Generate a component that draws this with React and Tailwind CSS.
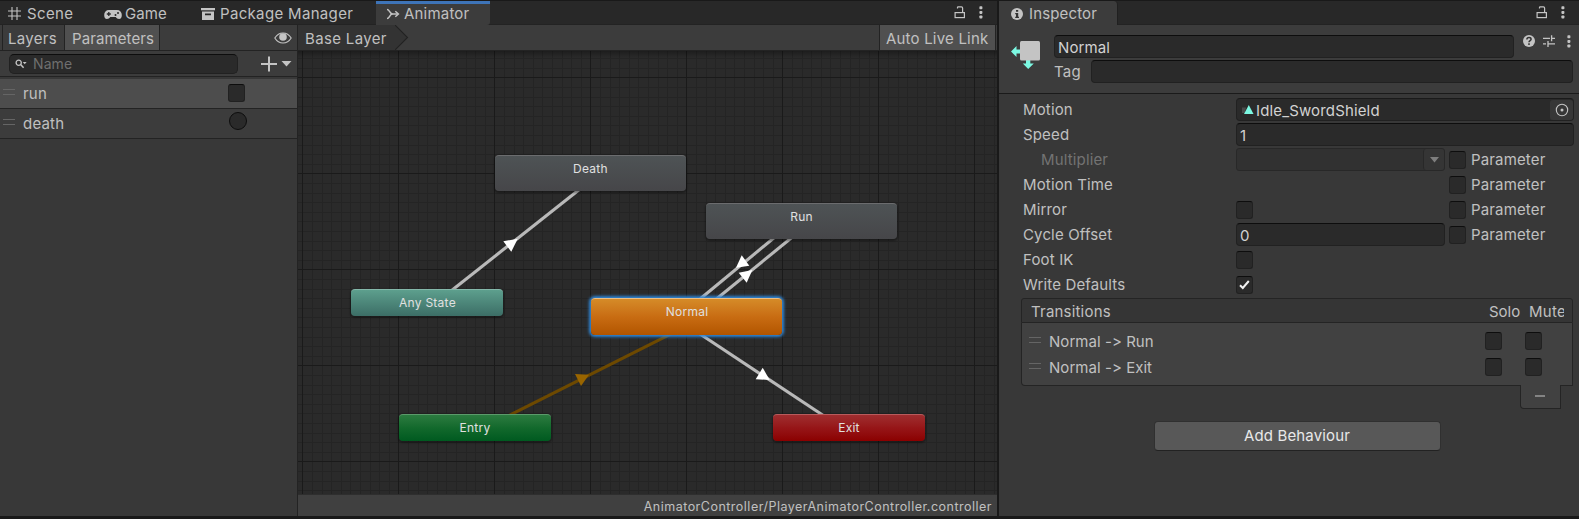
import React from "react";

const base = "whitespace-nowrap leading-none";

function Box({ className = "", checked = false }) {
  return (
    <span
      className={`flex h-[18px] w-[17px] shrink-0 items-center justify-center rounded-[3px] border border-[#212121] border-t-[#0d0d0d] bg-[#2a2a2a] ${className}`}
    >
      {checked && (
        <svg width="13" height="12" viewBox="0 0 13 12" fill="none">
          <path d="M2 6.2 4.8 9 10.8 2" stroke="#f0f0f0" strokeWidth="2" />
        </svg>
      )}
    </span>
  );
}

function Lock() {
  return (
    <svg width="12" height="13" viewBox="0 0 12 13" fill="none" stroke="#c4c4c4" strokeWidth="1.2">
      <rect x="1.1" y="6.6" width="9.3" height="5" />
      <path d="M3.500 2.600V1.500Q3.500.8 4.200.8H7.400Q8.600.8 8.600 2V6.400" />
    </svg>
  );
}

function Kebab() {
  return (
    <svg width="4" height="13" viewBox="0 0 4 13" fill="#c4c4c4">
      <rect x=".4" y=".3" width="3" height="3" rx=".8" />
      <rect x=".4" y="4.9" width="3" height="3" rx=".8" />
      <rect x=".4" y="9.5" width="3" height="3" rx=".8" />
    </svg>
  );
}

function Handle({ className = "" }) {
  return (
    <span className={`h-[6px] w-[12px] shrink-0 border-y border-[#656565] ${className}`} />
  );
}

function TabBar() {
  return (
    <div className="flex h-[24px] shrink-0 border-b border-[#232323] bg-[#282828] text-[15px] text-[#c0c0c0]">
      <div className="flex w-[95px] items-center pt-[2px] pl-[8px]">
        <svg width="13" height="13" viewBox="0 0 13 13" stroke="#c4c4c4" strokeWidth="1.1">
          <path d="M4 0v13M9 0v13M0 4h13M0 9h13" />
        </svg>
        <span className={`${base} ml-[6px] tracking-[0.35px]`}>Scene</span>
      </div>
      <div className="flex w-[95px] items-center pt-[2px] pl-[9px]">
        <svg className="mt-px" width="18" height="11" viewBox="0 0 18 11">
          <path d="M5 1h8c3 0 4.8 2 4.8 5 0 2.500-1 4-2.700 4-1.600 0-2.500-1-3.400-2H6.300c-.9 1-1.800 2-3.400 2C1.200 10 .2 8.500.2 6 .2 3 2 1 5 1Z" fill="#c4c4c4" />
          <path d="M2.800 5h4M4.800 3v4" stroke="#282828" strokeWidth="1.300" />
          <circle cx="11.500" cy="5.900" r="1" fill="#282828" />
          <circle cx="14" cy="3.900" r="1" fill="#282828" />
        </svg>
        <span className={`${base} ml-[3px] tracking-[0.1px]`}>Game</span>
      </div>
      <div className="flex w-[186px] items-center pt-[2px] pl-[11px]">
        <svg width="14" height="12" viewBox="0 0 14 12" fill="#c4c4c4">
          <path d="M0 0h14v2.300H0z" />
          <path fillRule="evenodd" d="M1 3.500h12V12H1zM4 5.500v1.700h6V5.500z" />
        </svg>
        <span className={`${base} ml-[5px] tracking-[0.33px]`}>Package Manager</span>
      </div>
      <div className="flex h-[24px] w-[114px] items-center rounded-br-[3px] border-t-[3px] border-[#3e74b8] bg-[#3c3c3c] pb-[2px] pl-[10px]">
        <svg width="14" height="12" viewBox="0 0 14 12" fill="none" stroke="#c4c4c4" strokeWidth="1.500">
          <path d="M1 1.500c1.300 0 1.700.7 2.300 1.700C4.200 5 5 6 6.800 6H12M1 10.500c1.300 0 1.700-.7 2.300-1.700C4.200 7 5 6 6.800 6" />
          <path d="M9.300 3.200 12.400 6 9.300 8.800" />
        </svg>
        <span className={`${base} ml-[4px] tracking-[0.2px]`}>Animator</span>
      </div>
      <div className="flex grow items-center justify-end gap-[13px] pr-[14px]">
        <Lock />
        <Kebab />
      </div>
    </div>
  );
}

function ParametersPanel() {
  return (
    <div className="flex w-[298px] shrink-0 flex-col border-r border-[#232323] bg-[#383838] text-[15px] text-[#c0c0c0]">
      <div className="flex h-[26px] shrink-0 border-b border-[#232323] bg-[#3c3c3c] pl-[2px]">
        <div className="flex w-[63px] items-center border-x border-[#232323] pt-[2px] pl-[5px]">
          <span className={`${base} tracking-[0.3px]`}>Layers</span>
        </div>
        <div className="flex w-[95px] items-center border-r border-[#232323] bg-[#505050] pt-[2px] pl-[7px]">
          <span className={`${base} tracking-[0.1px]`}>Parameters</span>
        </div>
        <div className="flex grow items-center justify-end pr-[5px]">
          <svg width="18" height="12" viewBox="0 0 18 12">
            <path d="M.8 6C3 2.500 5.800 1 9 1s6 1.500 8.200 5C15 9.500 12.200 11 9 11S3 9.500.8 6Z" fill="none" stroke="#c4c4c4" strokeWidth="1.100" />
            <circle cx="9" cy="5" r="3.800" fill="#c4c4c4" />
          </svg>
        </div>
      </div>
      <div className="flex h-[26px] shrink-0 items-center border-b border-[#232323] bg-[#3c3c3c] pl-[9px]">
        <div className="flex h-[20px] w-[229px] items-center rounded-[5px] border border-[#212121] border-t-[#0d0d0d] bg-[#2a2a2a] pl-[5px]">
          <svg width="12" height="10" viewBox="0 0 12 10">
            <circle cx="3.700" cy="3.700" r="2.600" fill="none" stroke="#c4c4c4" strokeWidth="1.300" />
            <path d="m5.600 5.600 3 3.200" stroke="#c4c4c4" strokeWidth="1.500" />
            <path d="M7.800 3h3.800L9.700 5.200z" fill="#c4c4c4" />
          </svg>
          <span className={`${base} ml-[6px] text-[14px] tracking-[0.1px] text-[#6f6f6f]`}>Name</span>
        </div>
        <svg className="ml-[23px]" width="31" height="16" viewBox="0 0 31 16">
          <path d="M8 .5v15M0 8h16" stroke="#c4c4c4" strokeWidth="2" />
          <path d="M20.500 5h10L25.500 10.500z" fill="#c4c4c4" />
        </svg>
      </div>
      <div className="mt-[2px] flex h-[30px] shrink-0 items-center border-b border-[#232323] bg-[#4d4d4d] pl-[3px]">
        <Handle className="mb-[4px]" />
        <span className={`${base} mb-px ml-[8px] w-[205px] tracking-[0.2px]`}>run</span>
        <Box className="mb-[2px]" />
      </div>
      <div className="flex h-[30px] shrink-0 items-center border-b border-[#232323] bg-[#3c3c3c] pl-[3px]">
        <Handle className="mb-[4px]" />
        <span className={`${base} mb-px ml-[8px] w-[206px] tracking-[0.2px]`}>death</span>
        <span className="mb-[5px] h-[18px] w-[18px] rounded-full border border-[#0d0d0d] bg-[#2a2a2a]" />
      </div>
    </div>
  );
}

const nodes = [
  { name: "Death", cls: "left-[197px] top-[104px] h-[36px] w-[191px] pt-[7px] from-[#4e5355] to-[#464649] border-t-[#6b6c6e]" },
  { name: "Run", cls: "left-[408px] top-[152px] h-[36px] w-[191px] pt-[7px] from-[#4e5355] to-[#464649] border-t-[#6b6c6e]" },
  { name: "Any State", cls: "left-[53px] top-[238px] h-[27px] w-[152px] pt-[7px] pl-px from-[#5d9f8d] to-[#3c6e66] border-t-[#84b8aa]" },
  { name: "Entry", cls: "left-[101px] top-[363px] h-[27px] w-[152px] pt-[7px] from-[#2b7b40] via-[#12692c] to-[#005a20] border-t-[#5b9a6a]" },
  { name: "Exit", cls: "left-[475px] top-[363px] h-[27px] w-[152px] pt-[7px] from-[#9f2d2f] via-[#961517] to-[#8b0000] border-t-[#b85b5c]" },
  { name: "Normal", cls: "left-[293px] top-[247px] h-[37px] w-[191px] pt-[7px] pl-px from-[#d58b28] via-[#c86c12] to-[#b25500] border-t-[#e9be88] shadow-[0_0_3px_2px_#2f86d6]!" },
];

function Graph() {
  return (
    <div className="relative h-[444px] shrink-0 overflow-hidden border-b border-[#2e2e2e] bg-[#2a2a2a]">
      <svg className="absolute inset-0" width="699" height="443" viewBox="298 51 699 443">
        <defs>
          <pattern id="minor" x="302" y="77" width="96" height="96" patternUnits="userSpaceOnUse">
            <path
              d="M10.500 0v96M20.500 0v96M29.500 0v96M39.500 0v96M48.500 0v96M58.500 0v96M68.500 0v96M77.500 0v96M87.500 0v96M0 10.500h96M0 20.500h96M0 29.500h96M0 39.500h96M0 48.500h96M0 58.500h96M0 68.500h96M0 77.500h96M0 87.500h96"
              stroke="#242424"
              strokeWidth="1"
            />
            <path d="M.5 0v96M0 .5h96" stroke="#1a1a1a" strokeWidth="1" />
          </pattern>
          <linearGradient id="shade" x1="0" y1="0" x2="0" y2="1">
            <stop offset="0" stopColor="#000" stopOpacity=".3" />
            <stop offset="1" stopColor="#000" stopOpacity="0" />
          </linearGradient>
        </defs>
        <rect x="298" y="51" width="699" height="443" fill="url(#minor)" />
        <rect x="298" y="51" width="699" height="7" fill="url(#shade)" />
        <g stroke="#b9b9b9" strokeWidth="3.100">
          <path d="M447.500 293.700 583.500 186.300" />
          <path d="M778 234.500 695.500 302.800" />
          <path d="M711.500 303 795.500 234.500" />
          <path d="M694 330 829 419.300" />
        </g>
        <path d="M504 418 678 330.300" stroke="#6d4900" strokeWidth="3.100" />
        <g fill="#fff">
          <path d="M517.700 238.700 503.300 241.300 511.300 251.700z" />
          <path d="M736 267.700 741.700 255.300 749.300 265.700z" />
          <path d="M752.300 270 738.700 272.700 746.700 282.700z" />
          <path d="M769.700 380 762.700 367.700 755.700 379.300z" />
        </g>
        <path d="M589 374.700 575 374 581 386z" fill="#996500" />
      </svg>
      {nodes.map((n) => (
        <div
          key={n.name}
          className={`absolute flex justify-center rounded-[4px] border-t bg-linear-to-b text-[12px] tracking-[0.25px] text-[#e0e0e0] shadow-[0_1px_2px_1px_rgba(0,0,0,0.35)] ${n.cls}`}
        >
          <span className={base}>{n.name}</span>
        </div>
      ))}
    </div>
  );
}

function GraphPanel() {
  return (
    <div className="flex grow flex-col text-[15px] text-[#c0c0c0]">
      <div className="flex h-[26px] shrink-0 justify-between border-b border-[#232323] bg-[#3c3c3c]">
        <div className="flex">
          <div className="flex w-[97px] items-center bg-[#333] pt-[2px] pl-[7px]">
            <span className={`${base} tracking-[0.35px]`}>Base Layer</span>
          </div>
          <svg width="14" height="25" viewBox="0 0 14 25">
            <path d="M0 0 12.500 12.500 0 25z" fill="#333" />
            <path d="M0 0 12.500 12.500 0 25" fill="none" stroke="#222" strokeWidth="1.100" />
          </svg>
        </div>
        <div className="mr-px flex w-[117px] items-center border-x border-[#232323] bg-[#505050] pt-[2px] pl-[6px]">
          <span className={`${base} tracking-[0.2px]`}>Auto Live Link</span>
        </div>
      </div>
      <Graph />
      <div className="flex grow items-center justify-end bg-[#404040] pt-[3px] pr-[5px] text-[12.500px]">
        <span className={`${base} tracking-[0.49px]`}>AnimatorController/PlayerAnimatorController.controller</span>
      </div>
    </div>
  );
}

const field = "flex h-[23px] items-center rounded-[4px] border border-[#212121] border-t-[#0d0d0d] bg-[#2a2a2a]";

function Row({ label, dim = false, param = false, children }) {
  return (
    <div className="flex h-[25px] items-center">
      <span className={`${base} w-[213px] shrink-0 tracking-[0.15px] ${dim ? "pl-[18px] text-[#737373]" : ""}`}>{label}</span>
      <div className="flex w-[213px] shrink-0">{children}</div>
      {param && (
        <>
          <Box />
          <span className={`${base} ml-[5px] tracking-[0.15px]`}>Parameter</span>
        </>
      )}
    </div>
  );
}

function Transition({ label }) {
  return (
    <div className="flex h-[26px] items-center pl-[7px]">
      <Handle className="mb-[4px]" />
      <span className={`${base} mb-px ml-[8px] w-[436px] tracking-[0.05px] [font-variant-ligatures:none] [font-feature-settings:'calt'_0]`}>{label}</span>
      <Box className="mb-[2px]" />
      <Box className="mb-[2px] ml-[23px]" />
    </div>
  );
}

function Inspector() {
  return (
    <div className="flex w-[580px] shrink-0 flex-col bg-[#383838] text-[15px] text-[#c0c0c0]">
      <div className="flex h-[24px] shrink-0 justify-between border-b border-[#232323] bg-[#282828]">
        <div className="flex h-[24px] w-[119px] items-center rounded-tr-[4px] border-r border-[#202020] bg-[#3c3c3c] pt-px pl-[12px]">
          <svg width="12" height="12" viewBox="0 0 12 12">
            <circle cx="6" cy="6" r="6" fill="#c4c4c4" />
            <path d="M5 2h2.200v1.800H5zM4.200 4.900h3v3.800H8V10H4.200V8.700H5V6.200h-.8z" fill="#333" />
          </svg>
          <span className={`${base} ml-[6px] tracking-[0.15px]`}>Inspector</span>
        </div>
        <div className="flex items-center gap-[13px] pr-[14px]">
          <Lock />
          <Kebab />
        </div>
      </div>
      <div className="flex h-[69px] shrink-0 border-b border-[#1a1a1a] bg-[#3c3c3c] pt-[10px] pl-[12px]">
        <svg className="mt-[5px]" width="30" height="30" viewBox="0 0 30 30">
          <path d="M0 11.500 5.500 6v3.500h5v4h-5V17zM15 19h4.300v4.500h3.500L17.200 29l-5.400-5.500H15z" fill="#7cf8e2" />
          <rect x="9" y="1" width="20" height="19.500" rx="1.500" fill="#c4c4c4" />
        </svg>
        <div className="ml-[13px] flex flex-col gap-[2px]">
          <div className="flex">
            <div className={`${field} w-[460px] pt-[2px] pl-[3px]`}>
              <span className={`${base} tracking-[0.1px] text-[#d2d2d2]`}>Normal</span>
            </div>
            <div className="ml-[9px] flex h-[13px] gap-[8px]">
              <svg width="12" height="12" viewBox="0 0 12 12">
                <circle cx="6" cy="6" r="6" fill="#c4c4c4" />
                <path d="M3.900 4.600C3.900 3 4.800 2.500 6 2.500s2.100.7 2.100 1.700C8.100 5.600 6 5.500 6 7.200M6 8.300V10" fill="none" stroke="#333" strokeWidth="1.500" />
              </svg>
              <svg width="12" height="12" viewBox="0 0 12 12" stroke="#c4c4c4" strokeWidth="1.300">
                <path d="M0 3.300h7M9 3.300h3M8.600.3v6M0 8.800h3M5 8.800h7M5 6v6" />
              </svg>
              <span className="ml-[4px]"><Kebab /></span>
            </div>
          </div>
          <div className="flex items-center">
            <span className={`${base} w-[37px] tracking-[0.2px]`}>Tag</span>
            <div className={`${field} w-[482px]`} />
          </div>
        </div>
      </div>
      <div className="mt-[3px] ml-[24px] flex flex-col">
        <Row label="Motion">
          <div className={`${field} w-[338px] shrink-0 justify-between border-t-[#1a1a1a] pl-[5px]`}>
            <div className="flex items-center pt-px">
              <svg width="12" height="10" viewBox="0 0 12 10">
                <path d="M0 2.500h4L3 8H0z" fill="#4a4a4a" />
                <path d="M6.800 0 11.500 9H2z" fill="#7cf8e2" />
              </svg>
              <span className={`${base} ml-[2px] tracking-[0.15px] text-[#d2d2d2]`}>Idle_SwordShield</span>
            </div>
            <div className="flex h-[20px] w-[23px] items-center justify-center rounded-[3px] bg-[#373737]">
              <svg width="14" height="14" viewBox="0 0 14 14">
                <circle cx="7" cy="7" r="5.700" fill="none" stroke="#c4c4c4" strokeWidth="1.100" />
                <circle cx="7" cy="7" r="1.500" fill="#c4c4c4" />
              </svg>
            </div>
          </div>
        </Row>
        <Row label="Speed">
          <div className={`${field} w-[338px] shrink-0 pt-[2px] pl-[3px] text-[#d2d2d2]`}><span className={base}>1</span></div>
        </Row>
        <Row label="Multiplier" dim param>
          <div className="flex h-[23px] w-[209px] justify-end rounded-[3px] border border-[#282828] bg-[#313131]">
            <div className="flex w-[21px] items-center justify-center rounded-[3px] border-l border-[#282828] bg-[#353535]">
              <svg width="9" height="6" viewBox="0 0 9 6"><path d="M0 0h9L4.500 5.500z" fill="#7e7e7e" /></svg>
            </div>
          </div>
        </Row>
        <Row label="Motion Time" param />
        <Row label="Mirror" param><Box /></Row>
        <Row label="Cycle Offset" param>
          <div className={`${field} w-[209px] pt-[2px] pl-[3px] text-[#d2d2d2]`}><span className={base}>0</span></div>
        </Row>
        <Row label="Foot IK"><Box /></Row>
        <Row label="Write Defaults"><Box checked /></Row>
      </div>
      <div className="mt-px ml-[22px] flex w-[552px] flex-col">
        <div className="flex h-[25px] items-center rounded-t-[3px] border border-[#242424] bg-[#353535] pt-[2px] pl-[9px]">
          <span className={`${base} w-[458px] tracking-[0.2px]`}>Transitions</span>
          <span className={`${base} w-[40px]`}>Solo</span>
          <span className={`${base} w-[35px] overflow-hidden py-px tracking-[0.3px]`}>Mute</span>
        </div>
        <div className="h-[63px] rounded-bl-[4px] border border-t-0 border-[#242424] bg-[#414141] pt-[6px]">
          <Transition label="Normal -> Run" />
          <Transition label="Normal -> Exit" />
        </div>
        <div className="relative -mt-px mr-[12px] flex h-[24px] w-[41px] items-center justify-center self-end rounded-bl-[4px] border border-t-0 border-[#242424] bg-[#414141]">
          <span className="mr-px mb-px h-[2px] w-[10px] bg-[#848484]" />
        </div>
      </div>
      <div className="mt-[12px] ml-[155px] flex h-[30px] w-[287px] items-center justify-center rounded-[4px] border border-[#303030] border-b-[#222] bg-[#585858] pr-px pb-px text-[#e8e8e8]">
        <span className={`${base} tracking-[0.15px]`}>Add Behaviour</span>
      </div>
    </div>
  );
}

export default function App() {
  return (
    <div className="flex h-[519px] w-[1579px] overflow-hidden bg-[#191919] pt-px pb-[3px] font-['Inter',sans-serif]">
      <div className="mr-[2px] flex w-[997px] shrink-0 flex-col">
        <TabBar />
        <div className="flex grow">
          <ParametersPanel />
          <GraphPanel />
        </div>
      </div>
      <Inspector />
    </div>
  );
}
